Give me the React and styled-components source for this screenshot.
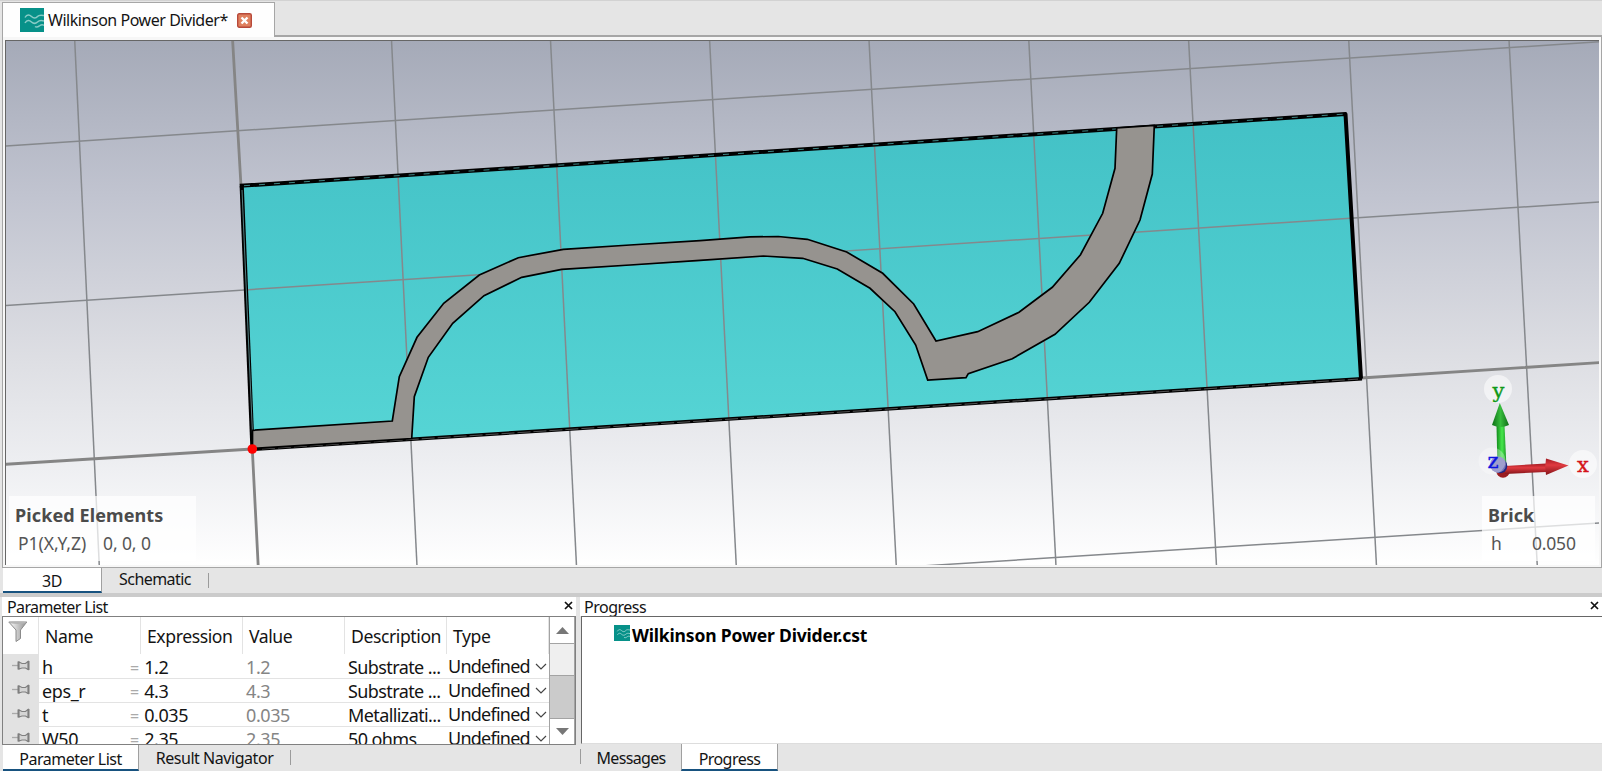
import React from "react";
import styled, { createGlobalStyle } from "styled-components";

const Global = createGlobalStyle`
  * { box-sizing: border-box; }
  html, body { margin: 0; padding: 0; overflow: hidden; }
  body { background: #e5e5e5; color: #111; font-family: "Noto Sans", "Open Sans", sans-serif; font-size: 16px; }
  svg { display: block; flex: none; }
`;

const Window = styled.div`
  width: 1602px;
  height: 771px;
  display: flex;
  flex-direction: column;
  background: #e5e5e5;
  border-top: 1px solid #d2d2d2;
  overflow: hidden;
`;

const Label = styled.span`
  white-space: pre;
  line-height: 20px;
  font-family: "Noto Sans", sans-serif;
  font-size: ${(p) => p.$size || 16}px;
  font-weight: ${(p) => (p.$bold ? 700 : 400)};
  letter-spacing: ${(p) => p.$track || 0}px;
  color: ${(p) => p.$color || "#141414"};
`;

const DocumentBar = styled.header`
  height: 36px;
  flex: none;
  display: flex;
  padding: 1px 0 0 2px;
`;

const DocumentTab = styled.div`
  width: 273px;
  display: flex;
  align-items: center;
  padding-left: 17px;
  background: #fefefe;
  border: 1px solid #a6a6a6;
  border-bottom: 0;
`;

const TabTitle = styled(Label)`
  width: 193px;
  padding-left: 4px;
`;

const BarRule = styled.div`
  flex: 1;
  border-bottom: 2px solid #a6a6a6;
`;

const Viewport = styled.main`
  position: relative;
  height: 531px;
  flex: none;
  margin-left: 2px;
  border-left: 1px solid #a6a6a6;
  border-bottom: 1px solid #a6a6a6;
  border-right: 1px solid #a6a6a6;
  background: #f7f7f7;
  padding: 3px 2px 2px 2px;
`;

const Canvas = styled.svg`
  display: block;
  width: 1594px;
  height: 525px;
  border-left: 1px solid #666;
  border-top: 1px solid #666;
`;

const Overlay = styled.section`
  position: absolute;
  top: 459px;
  left: ${(p) => p.$left}px;
  width: ${(p) => p.$width}px;
  height: 65px;
  padding: 9px 0 0 6px;
  background: rgba(255, 255, 255, 0.72);
  display: flex;
  flex-direction: column;
  gap: 8px;
`;

const OverlayRow = styled.div`
  display: flex;
  padding-left: 3px;
`;

const OverlayKey = styled(Label)`
  width: ${(p) => p.$width}px;
`;

const ViewTabs = styled.nav`
  height: 25px;
  flex: none;
  display: flex;
  padding-left: 3px;
`;

const Tab = styled.div`
  width: ${(p) => p.$width}px;
  height: 100%;
  display: flex;
  justify-content: center;
  padding-top: ${(p) => p.$top || 3}px;
  ${(p) =>
    p.$active &&
    `background: #fff; border-bottom: 2px solid #17527f; border-right: 1px solid #a0a0a0;`}
  ${(p) => p.$edge && `border-left: 1px solid #a0a0a0;`}
`;

const Separator = styled.i`
  width: 1px;
  height: 15px;
  margin-top: 5px;
  background: #9b9b9b;
`;

const Docks = styled.div`
  flex: 1;
  min-height: 0;
  display: flex;
  padding-left: 2px;
  gap: 4px;
  border-top: 4px solid #cbcbcb;
`;

const Dock = styled.section`
  width: ${(p) => p.$width}px;
  flex: none;
  display: flex;
  flex-direction: column;
`;

const DockHeader = styled.div`
  height: 19px;
  flex: none;
  display: flex;
  justify-content: space-between;
  align-items: center;
  padding: 0 3px 0 ${(p) => p.$left || 4}px;
  background: #fff;
`;

const CloseMark = styled.svg`
  width: 9px;
  height: 9px;
  margin-bottom: 2px;
`;

const DockTabs = styled.nav`
  flex: 1;
  display: flex;
  padding-left: ${(p) => p.$left || 0}px;
`;

const TableBox = styled.div`
  height: 129px;
  flex: none;
  display: flex;
  background: #fff;
  border: 1px solid #808080;
  overflow: hidden;
`;

const Table = styled.div`
  width: 546px;
  flex: none;
  height: 127px;
  overflow: hidden;
`;

const HeaderRow = styled.div`
  height: 37px;
  display: grid;
  grid-template-columns: 36px 102px 102px 102px 102px 102px;
`;

const HeaderCell = styled.div`
  padding: 9px 0 0 6px;
  border-right: 1px solid #e3e3e3;
  display: flex;
  align-items: flex-start;
`;

const FilterCell = styled(HeaderCell)`
  padding: 4px 0 0 5px;
`;

const Row = styled.div`
  height: 24px;
  display: grid;
  grid-template-columns: 36px 88px 116px 102px 100px 104px;
`;

const PinCell = styled.div`
  background: #e2e2e2;
  padding: 6px 0 0 9px;
`;

const Cell = styled.div`
  display: flex;
  align-items: baseline;
  gap: ${(p) => p.$gap || 5}px;
  padding: ${(p) => p.$top || 3}px 0 0 3px;
  border-bottom: 1px solid #e3e3e3;
`;

const Scrollbar = styled.div`
  width: 26px;
  display: flex;
  flex-direction: column;
  background: #cbcbcb;
  border-left: 1px solid #a3a3a3;
  border-right: 1px solid #a3a3a3;
`;

const ScrollPart = styled.div`
  height: ${(p) => p.$h}px;
  flex: none;
  display: grid;
  place-items: center;
  background: ${(p) => p.$bg};
  border-top: ${(p) => (p.$first ? 0 : 1)}px solid #a3a3a3;
`;

const ProgressBox = styled.div`
  height: 128px;
  flex: none;
  margin-left: 1px;
  background: #fff;
  border-top: 1px solid #666;
  border-left: 1px solid #666;
  border-bottom: 1px solid #ddd;
  padding: 8px 0 0 32px;
  display: flex;
  gap: 2px;
`;

function WaveLogo({ size }) {
  return (
    <svg width={size} height={size} viewBox="0 0 24 24">
      <rect width="24" height="24" fill="#079189" />
      <g fill="none" stroke="#9fd6d1" strokeOpacity=".85" strokeWidth="1.500">
        <path d="M5 9.500c2-3.500 4.500-3 6.500-1s4.500 2 6 0 3.500-1.500 6.500-1" />
        <path d="M5 15c2-3.500 4.500-3 6.500-1s4.500 1.500 6 0 3.500-2 6.500-1" />
        <path d="M15 18.500c2 1.500 3.500 0 5-1s2.500-.8 4-.3" />
      </g>
    </svg>
  );
}

function CloseBadge() {
  return (
    <svg width="15" height="15" viewBox="0 0 15 15">
      <rect x=".7" y=".7" width="13.600" height="13.600" rx="1.500" fill="#df805f" stroke="#b8493a" strokeWidth="1.400" />
      <path d="M4.500 4.500l6 6M10.500 4.500l-6 6" stroke="#fff" strokeWidth="2.400" />
    </svg>
  );
}

function Close() {
  return (
    <CloseMark viewBox="0 0 9 9">
      <path d="M1 1l7 7M8 1L1 8" stroke="#111" strokeWidth="1.700" />
    </CloseMark>
  );
}

function Funnel() {
  return (
    <svg width="20" height="22" viewBox="0 0 20 22">
      <defs>
        <linearGradient id="funnel">
          <stop offset="0" stopColor="#fff" />
          <stop offset="1" stopColor="#8f8f8f" />
        </linearGradient>
      </defs>
      <path d="M.8 1h18l-6.300 8v8.500L8 20.500V9z" fill="url(#funnel)" stroke="#8a8a8a" />
      <ellipse cx="9.800" cy="1.700" rx="8.500" ry="1.200" fill="#b5b5b5" />
    </svg>
  );
}

function Pin() {
  return (
    <svg width="19" height="11" viewBox="0 0 19 11">
      <path d="M0 5.500h6" stroke="#aaa" strokeWidth="1.300" />
      <path d="M6.500 1.500v8M16.500 1v9" stroke="#7d7d7d" strokeWidth="2" />
      <path d="M7 2l3 1.500h3.500L16 1.500v8L13.500 8H10L7 9z" fill="#d5d5d5" stroke="#808080" strokeWidth="1.200" />
    </svg>
  );
}

const GRID = [
  [74.7, 40, 99.3, 566], [391.5, 40, 417, 566], [550.5, 40, 576.5, 566],
  [709.6, 40, 736.3, 566], [869, 40, 896.3, 566], [1028.8, 40, 1056, 566],
  [1188.6, 40, 1216.5, 566], [1348.7, 40, 1376.5, 566], [1509, 40, 1537.3, 566],
  [5, 146, 1600, 41.7], [5, 305.5, 1600, 202], [914, 566.5, 1600, 523],
];

const SUBSTRATE = "242,185.700 1345.500,114 1361,378.500 252.500,449";
const TRACE =
  "252.500,430.300 392.300,421 399.300,376.700 417,337.300 443.700,303.300 479.300,275 518.300,257.700 563.300,249.300 630,245 700,240.700 750,236.900 778.300,236.500 807.300,239.300 846.700,252 882.700,273.300 913.700,304 936,341 977.700,331.700 1019,312.300 1052.300,287.300 1080.500,254.700 1102.700,213.300 1115,168.300 1116.700,128 1154.300,125.500 1152.300,174 1140,220 1119.300,263.300 1089.300,302.300 1055,334.300 1012.300,358.700 968.300,373.700 966,377.700 927.700,380 915.700,345 895,311.700 870,288.300 837.300,269 802.700,258.300 763.300,256 700,260.300 630,265 561.700,269.300 521.700,277.300 484,295.700 452.700,323.300 428.300,357.300 414.300,396.700 411.700,438.500 252.500,448.500";

function Scene() {
  return (
    <Canvas viewBox="6 41 1593 524">
      <defs>
        <linearGradient id="sky" x1="0" y1="0" x2="0" y2="1">
          <stop offset="0" stopColor="#a5aab8" />
          <stop offset=".3" stopColor="#c1c4d0" />
          <stop offset=".6" stopColor="#dddee3" />
          <stop offset=".8" stopColor="#edeef1" />
          <stop offset="1" stopColor="#fff" />
        </linearGradient>
        <linearGradient id="board" x1="0" y1="0" x2="0" y2="1">
          <stop offset="0" stopColor="#43c1c6" />
          <stop offset="1" stopColor="#56d5d5" />
        </linearGradient>
        <linearGradient id="green">
          <stop offset="0" stopColor="#138a1c" />
          <stop offset=".55" stopColor="#46e84c" />
          <stop offset="1" stopColor="#1d9426" />
        </linearGradient>
        <linearGradient id="greenCone">
          <stop offset="0" stopColor="#0d6e16" />
          <stop offset=".5" stopColor="#36bd3c" />
          <stop offset="1" stopColor="#116d18" />
        </linearGradient>
        <linearGradient id="red" x1="0" y1="0" x2="0" y2="1">
          <stop offset="0" stopColor="#a31b22" />
          <stop offset=".4" stopColor="#e03a40" />
          <stop offset="1" stopColor="#84151a" />
        </linearGradient>
      </defs>
      <rect x="5" y="40" width="1596" height="527" fill="url(#sky)" />
      <polygon points={SUBSTRATE} fill="url(#board)" />
      <g stroke="#85888c" strokeWidth="1.500">
        {GRID.map(([x1, y1, x2, y2]) => (
          <line key={`${x1}-${y1}`} x1={x1} y1={y1} x2={x2} y2={y2} />
        ))}
      </g>
      <g stroke="#858585" strokeWidth="2.800">
        <path d="M232.600 40L241 186M252.300 449L258.200 566M5 464.300L252.300 449M1361 378L1600 362.600" />
      </g>
      <g fill="none" stroke="#000">
        <polyline points="241.700,186 252.500,449" strokeWidth="4.200" />
        <polyline points="242,190 253,446" stroke="#5f8f92" strokeWidth=".9" />
        <polyline points="239.800,185.800 1345.500,114.100 1361,378.500" strokeWidth="4" strokeLinejoin="round" />
        <polyline points="244,185.700 1343,114.200" stroke="#4fa6a5" strokeWidth=".8" strokeDasharray="6 9" />
        <polyline points="252.500,449.300 1362,378.700" strokeWidth="3.500" />
        <polyline points="262,449 1358,379.100" stroke="#777" strokeWidth=".7" strokeDasharray="13 3" />
      </g>
      <polygon points={TRACE} fill="#96938f" stroke="#000" strokeWidth="1.700" />
      <circle cx="252.300" cy="449" r="4.800" fill="#f00" />

      <g fill="#fff" fillOpacity=".55">
        <circle cx="1498" cy="389" r="14" />
        <circle cx="1583" cy="464" r="14" />
      </g>
      <circle cx="1503" cy="471" r="6.700" fill="#9a1b20" />
      <path d="M1496.500 425h8l2 43-9 3z" fill="url(#green)" />
      <path d="M1499.800 403l9.200 22q-8.500 4-17 0z" fill="url(#greenCone)" />
      <path d="M1505 466l41-2.500v8.500l-41 2z" fill="url(#red)" />
      <path d="M1546 458.500q-1.500 8 0 16.500l22.500-9.500z" fill="url(#red)" />
      <circle cx="1500" cy="466" r="7.300" fill="#22267f" />
      <circle cx="1498" cy="464.500" r="8" fill="#7474b8" />
      <circle cx="1492" cy="461" r="13.500" fill="#fff" fillOpacity=".3" />
      <g fontFamily="'DejaVu Serif', serif" fontSize="21" textAnchor="middle" strokeWidth=".4">
        <text x="1498.500" y="398" fill="#109a18" stroke="#109a18">y</text>
        <text x="1583" y="471.500" fill="#d5141a" stroke="#d5141a">x</text>
        <text x="1493" y="468" fill="#0b13e0" stroke="#0b13e0">z</text>
      </g>
    </Canvas>
  );
}

const PARAMETERS = [
  { name: "h", value: "1.2", description: "Substrate ..." },
  { name: "eps_r", value: "4.3", description: "Substrate ..." },
  { name: "t", value: "0.035", description: "Metallizati..." },
  { name: "W50", value: "2.35", description: "50 ohms" },
];

const COLUMNS = ["Name", "Expression", "Value", "Description", "Type"];

function ParameterRow({ item }) {
  return (
    <Row>
      <PinCell><Pin /></PinCell>
      <Cell><Label $size={18} $track={-0.4}>{item.name}</Label></Cell>
      <Cell>
        <Label $size={16} $color="#aaa">=</Label>
        <Label $size={18} $track={-0.4}>{item.value}</Label>
      </Cell>
      <Cell><Label $size={18} $track={-0.4} $color="#858585">{item.value}</Label></Cell>
      <Cell><Label $size={18} $track={-0.6}>{item.description}</Label></Cell>
      <Cell $top={2} $gap={5}>
        <Label $size={18} $track={-0.75}>Undefined</Label>
        <svg width="12" height="10" viewBox="0 0 12 10">
          <path d="M1 1l5 5 5-5" fill="none" stroke="#444" strokeWidth="1.200" />
        </svg>
      </Cell>
    </Row>
  );
}

export default function App() {
  return (
    <Window>
      <Global />
      <DocumentBar>
        <DocumentTab>
          <WaveLogo size={24} />
          <TabTitle $track={-0.46}>Wilkinson Power Divider*</TabTitle>
          <CloseBadge />
        </DocumentTab>
        <BarRule />
      </DocumentBar>
      <Viewport>
        <Scene />
        <Overlay $left={6} $width={187}>
          <Label $bold $size={18} $color="#4b4b4b" $track={0.1}>Picked Elements</Label>
          <OverlayRow>
            <OverlayKey $width={85} $size={17.5} $color="#555" $track={-0.05}>P1(X,Y,Z)</OverlayKey>
            <Label $size={17.5} $color="#555" $track={-0.1}>0, 0, 0</Label>
          </OverlayRow>
        </Overlay>
        <Overlay $left={1479} $width={113}>
          <Label $bold $size={18} $color="#4b4b4b" $track={0.1}>Brick</Label>
          <OverlayRow>
            <OverlayKey $width={41} $size={17.5} $color="#555">h</OverlayKey>
            <Label $size={17.5} $color="#555" $track={-0.2}>0.050</Label>
          </OverlayRow>
        </Overlay>
      </Viewport>
      <ViewTabs>
        <Tab $active $width={99}><Label $track={-0.5}>3D</Label></Tab>
        <Tab $width={106} $top={1}><Label $track={-0.55}>Schematic</Label></Tab>
        <Separator />
      </ViewTabs>
      <Docks>
        <Dock $width={574}>
          <DockHeader $left={5}>
            <Label $track={-0.62}>Parameter List</Label>
            <Close />
          </DockHeader>
          <TableBox>
            <Table>
              <HeaderRow>
                <FilterCell><Funnel /></FilterCell>
                {COLUMNS.map((c) => (
                  <HeaderCell key={c}><Label $size={17.6} $track={-0.42}>{c}</Label></HeaderCell>
                ))}
              </HeaderRow>
              {PARAMETERS.map((item) => <ParameterRow key={item.name} item={item} />)}
            </Table>
            <Scrollbar>
              <ScrollPart $h={26} $bg="#fff" $first>
                <svg width="13" height="7"><path d="M0 7l6.500-7L13 7z" fill="#777" /></svg>
              </ScrollPart>
              <ScrollPart $h={32} $bg="#efefef" />
              <ScrollPart $h={43} $bg="#cbcbcb" />
              <ScrollPart $h={26} $bg="#fff">
                <svg width="13" height="7"><path d="M0 0h13L6.500 7z" fill="#777" /></svg>
              </ScrollPart>
            </Scrollbar>
          </TableBox>
          <DockTabs $left={1}>
            <Tab $active $width={136} $top={4}><Label $track={-0.5}>Parameter List</Label></Tab>
            <Tab $width={151} $top={3}><Label $track={-0.45}>Result Navigator</Label></Tab>
            <Separator />
          </DockTabs>
        </Dock>
        <Dock $width={1022}>
          <DockHeader>
            <Label $track={-0.5}>Progress</Label>
            <Close />
          </DockHeader>
          <ProgressBox>
            <WaveLogo size={16} />
            <Label $bold $size={17.5} $track={-0.17} $color="#000">Wilkinson Power Divider.cst</Label>
          </ProgressBox>
          <DockTabs>
            <Separator />
            <Tab $width={100} $top={4}><Label $track={-0.65}>Messages</Label></Tab>
            <Tab $active $edge $width={97} $top={5}><Label $track={-0.55}>Progress</Label></Tab>
          </DockTabs>
        </Dock>
      </Docks>
    </Window>
  );
}
